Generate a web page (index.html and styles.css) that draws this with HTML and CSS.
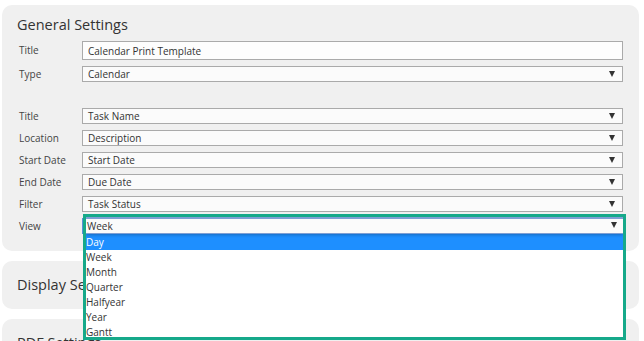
FILE: index.html
```html
<!DOCTYPE html>
<html lang="en">
<head>
  <meta charset="UTF-8" />
  <title>Print Template Settings</title>
  <link rel="stylesheet" href="styles.css">
</head>
<body>

  <section class="panel general">
    <h2>General Settings</h2>
    <div class="form">
      <label>Title</label>
      <div class="field"><input class="text-input" type="text" value="Calendar Print Template" /></div>

      <label>Type</label>
      <div class="field"><div class="select">Calendar</div></div>

      <div class="spacer"></div>

      <label>Title</label>
      <div class="field"><div class="select">Task Name</div></div>

      <label>Location</label>
      <div class="field"><div class="select">Description</div></div>

      <label>Start Date</label>
      <div class="field"><div class="select">Start Date</div></div>

      <label>End Date</label>
      <div class="field"><div class="select">Due Date</div></div>

      <label>Filter</label>
      <div class="field"><div class="select">Task Status</div></div>

      <label>View</label>
      <div class="field">
        <div class="select focused">Week</div>
        <div class="dropdown">
          <div class="select open">Week</div>
          <ul class="options">
            <li class="active">Day</li>
            <li>Week</li>
            <li>Month</li>
            <li>Quarter</li>
            <li>Halfyear</li>
            <li>Year</li>
            <li>Gantt</li>
          </ul>
        </div>
      </div>
    </div>
  </section>

  <section class="panel collapsed">
    <h2>Display Settings</h2>
  </section>

  <section class="panel collapsed last">
    <h2>PDF Settings</h2>
  </section>

</body>
</html>
```

FILE: styles.css
```css
body {
  font-family: 'Open Sans', 'Noto Sans', sans-serif;
  background-color: white;
  color: #333;
  margin: 0;
  padding: 5px 5px 0 2px;
  overflow: hidden;
  height: 336px;
}
.panel {
  background-color: #f0f0f0;
  border-radius: 10px;
  margin-bottom: 10px;
}
.panel h2 {
  margin: 0;
  font-size: 14.5px;
  font-weight: normal;
  color: #333;
  line-height: 20px;
}
.general {
  padding: 10px 16px 17px 15px;
}
.form {
  display: grid;
  grid-template-columns: 65px 1fr;
  row-gap: 6px;
  margin-top: 6px;
  font-size: 10px;
}
.form label {
  color: #444;
  padding-left: 2px;
  line-height: 16px;
}
.form label:first-child {
  line-height: 19px;
}
.spacer {
  grid-column: 1 / 3;
  height: 14px;
}
.field {
  position: relative;
}
.text-input {
  display: block;
  box-sizing: border-box;
  width: 100%;
  height: 19px;
  margin: 0;
  padding: 0 5px;
  border: 1px solid #aaa;
  background: #fdfdfd;
  font-family: inherit;
  font-size: 10px;
  color: #333;
}
.select {
  position: relative;
  box-sizing: border-box;
  height: 16px;
  line-height: 14px;
  padding: 0 5px;
  border: 1px solid #aaa;
  background: #fbfbfb;
  color: #333;
}
.select::after {
  content: "";
  position: absolute;
  right: 7px;
  top: 4px;
  border-left: 3px solid transparent;
  border-right: 3px solid transparent;
  border-top: 6px solid #333;
}
.select.focused {
  border-color: #5b8fd6;
}
.dropdown {
  position: absolute;
  top: -4px;
  left: 1px;
  right: -3px;
  height: 126px;
  box-sizing: border-box;
  border: 3px solid #16a98a;
  background: white;
  overflow: hidden;
  z-index: 10;
}
.select.open {
  border: none;
  border-top: 2px solid #7f9fd4;
  border-bottom: 1px solid #7f9fd4;
  height: 17px;
  padding: 0 1px;
  box-shadow: 0 1px 3px rgba(0, 0, 0, 0.25);
}
.select.open::after {
  right: 6px;
  top: 3px;
}
.options {
  list-style: none;
  margin: 0;
  padding: 0;
}
.options li {
  height: 15px;
  line-height: 15px;
  color: #333;
}
.options li.active {
  height: 16px;
  line-height: 17px;
  background-color: #1e8fff;
  color: white;
}
.collapsed {
  height: 48px;
  padding: 0 15px;
  display: flex;
  align-items: center;
}
.last {
  height: 22px;
  align-items: flex-start;
  padding-top: 14px;
  overflow: hidden;
  margin-bottom: 0;
}
```
